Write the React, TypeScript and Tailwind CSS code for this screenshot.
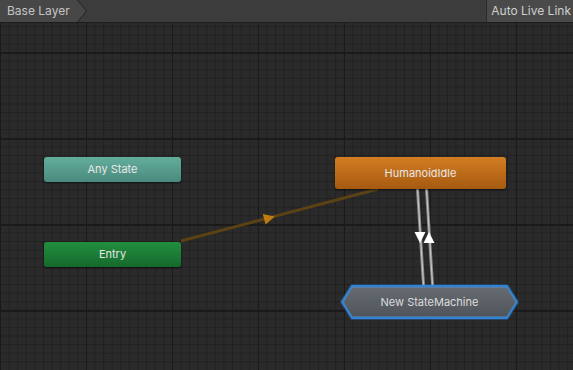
import React from "react";

const font = { fontFamily: "Inter, 'Noto Sans', sans-serif" };

function StateNode({
  label,
  className,
}: {
  label: string;
  className: string;
}) {
  return (
    <div
      className={`absolute flex items-center justify-center rounded-[3px] text-[11px] text-[#e8e8e8] shadow-[0_1px_2px_rgba(0,0,0,0.6)] ${className}`}
    >
      {label}
    </div>
  );
}

function StateMachineNode() {
  return (
    <div className="absolute left-[341px] top-[262px] flex h-[34px] w-[177px] items-center justify-center">
      <svg className="absolute inset-0 overflow-visible" width="177" height="34" viewBox="0 0 177 34">
        <defs>
          <linearGradient id="sm" x1="0" y1="0" x2="0" y2="1">
            <stop offset="0" stopColor="#676b72" />
            <stop offset="1" stopColor="#4f535a" />
          </linearGradient>
        </defs>
        <polygon
          points="11,1 166,1 176,17 166,33 11,33 1,17"
          fill="none"
          stroke="#2d7fd0"
          strokeOpacity="0.35"
          strokeWidth="4"
          strokeLinejoin="round"
        />
        <polygon
          points="11,1 166,1 176,17 166,33 11,33 1,17"
          fill="url(#sm)"
          stroke="#2f84d8"
          strokeWidth="1.8"
          strokeLinejoin="round"
        />
        <polygon
          points="11,2.5 166,2.5 174.5,17 166,31.5 11,31.5 2.5,17"
          fill="none"
          stroke="#5aa8f0"
          strokeOpacity="0.4"
          strokeWidth="0.8"
        />
      </svg>
      <span className="relative text-[11px] text-[#dcdcdc]">New StateMachine</span>
    </div>
  );
}

function Wires() {
  return (
    <svg className="absolute inset-0" width="573" height="347" viewBox="0 0 573 347">
      {/* Entry -> HumanoidIdle */}
      <line x1="181" y1="218" x2="378" y2="166" stroke="#5b4215" strokeWidth="3" />
      <polygon points="-5,-5.5 6,0 -5,5.5" fill="#c07c12" transform="translate(269 195) rotate(-14.8)" />

      {/* HumanoidIdle <-> New StateMachine */}
      <line x1="417.5" y1="166" x2="423.5" y2="262" stroke="#8c8c8c" strokeWidth="3" />
      <line x1="417.5" y1="166" x2="423.5" y2="262" stroke="#c8c8c8" strokeWidth="1" />
      <line x1="426.5" y1="166" x2="432.5" y2="262" stroke="#8c8c8c" strokeWidth="3" />
      <line x1="426.5" y1="166" x2="432.5" y2="262" stroke="#c8c8c8" strokeWidth="1" />
      <polygon points="414.5,209 425.5,209 420,220" fill="#ffffff" />
      <polygon points="423.5,220 434.5,220 429,209" fill="#ffffff" />
    </svg>
  );
}

export default function App() {
  return (
    <div className="flex h-[370px] w-[573px] flex-col overflow-hidden bg-[#282828]" style={font}>
      <div className="flex h-[23px] shrink-0 items-stretch border-b border-[#1c1c1c] bg-[#3c3c3c] text-[12px] text-[#c4c4c4]">
        <div className="flex w-[87px] items-stretch bg-[#242424] [clip-path:polygon(0_0,78px_0,87px_50%,78px_100%,0_100%)]">
          <div className="flex w-[86px] items-center bg-[#474747] pl-[7px] [clip-path:polygon(0_0,77px_0,86px_50%,77px_100%,0_100%)]">
            Base Layer
          </div>
        </div>
        <div className="flex-1" />
        <div className="flex items-center border-l border-[#2a2a2a] bg-[#4a4a4a] pl-[4px] pr-[2px] text-[#cfcfcf]">
          Auto Live Link
        </div>
      </div>

      <div className="relative flex-1 bg-[#2a2a2a] bg-[linear-gradient(to_right,#1a1a1a_1px,transparent_1px),linear-gradient(to_bottom,#1a1a1a_2px,transparent_2px),linear-gradient(to_right,#212121_1px,transparent_1px),linear-gradient(to_bottom,#212121_1px,transparent_1px)] [background-size:86px_86px,86px_86px,8.6px_8.6px,8.6px_8.6px] [background-position:0_0,0_29px,0_0,0_3.2px]">
        <Wires />
        <StateNode
          label="Any State"
          className="left-[44px] top-[134px] h-[25px] w-[137px] bg-[linear-gradient(to_bottom,#63ad9c,#4a8a7d)]"
        />
        <StateNode
          label="Entry"
          className="left-[44px] top-[219px] h-[25px] w-[137px] bg-[linear-gradient(to_bottom,#228f3f,#15692c)]"
        />
        <StateNode
          label="HumanoidIdle"
          className="left-[335px] top-[134px] h-[32px] w-[171px] bg-[linear-gradient(to_bottom,#d27d22,#a65a10)]"
        />
        <StateMachineNode />
      </div>
    </div>
  );
}
